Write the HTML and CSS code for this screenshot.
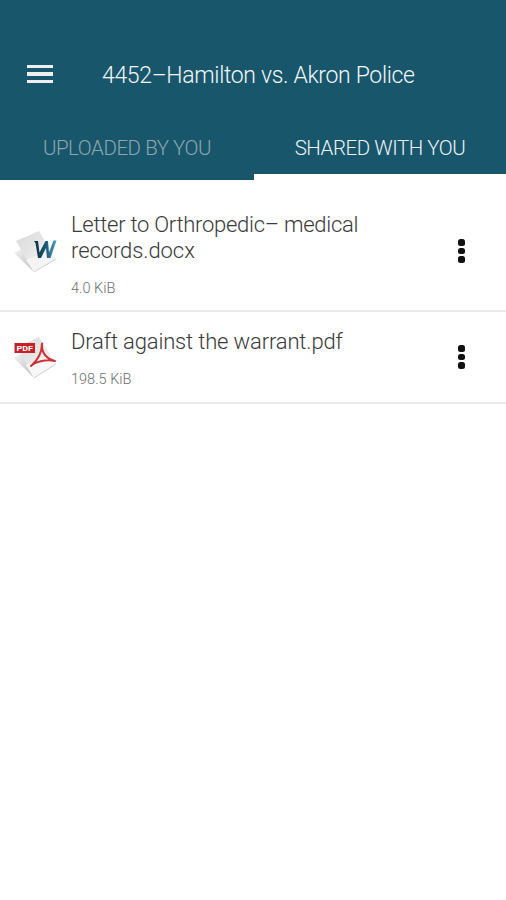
FILE: index.html
```html
<!DOCTYPE html>
<html lang="en">
<head>
  <meta charset="UTF-8">
  <title>4452–Hamilton vs. Akron Police</title>
  <link rel="stylesheet" href="styles.css">
</head>
<body>
  <header class="app-header">
    <div class="toolbar">
      <button class="menu" aria-label="Menu"><span></span><span></span><span></span></button>
      <h1>4452–Hamilton vs. Akron Police</h1>
    </div>
    <nav class="tabs">
      <a class="tab">UPLOADED BY YOU</a>
      <a class="tab active">SHARED WITH YOU</a>
    </nav>
  </header>

  <main class="files">
    <div class="file file-tall">
      <svg class="file-icon" width="44" height="44" viewBox="0 0 44 44">
        <defs>
          <linearGradient id="paper" x1="0" y1="0" x2="1" y2="1">
            <stop offset="0" stop-color="#d8d8d8"/>
            <stop offset="1" stop-color="#fafafa"/>
          </linearGradient>
          <linearGradient id="shade" x1="0" y1="0" x2="1" y2="1">
            <stop offset="0" stop-color="#f4f4f4"/>
            <stop offset="1" stop-color="#bdbdbd"/>
          </linearGradient>
          <linearGradient id="word" x1="0" y1="0" x2="1" y2="0">
            <stop offset="0" stop-color="#102c3e"/>
            <stop offset=".55" stop-color="#1b5c7c"/>
            <stop offset="1" stop-color="#4fa3c4"/>
          </linearGradient>
        </defs>
        <path d="M0 24L8 20L20 43Z" fill="url(#shade)"/>
        <path d="M2 12L25 2L42 30L20 43Z" fill="url(#paper)"/>
        <path d="M12 31L33 23L42 30L20 43Z" fill="#f4f4f4"/>
        <path d="M20 43L42 30" stroke="#d2d2d2"/>
        <path d="M20 12H24L25.500 23.500L31.500 12H34L35 23.500L39.500 11.500H42.500L36.500 29H33L32 19L27 29H24L21.500 14Z" fill="url(#word)"/>
      </svg>
      <div class="info">
        <div class="name">Letter to Orthropedic– medical<br><span class="name-rest">records.docx</span></div>
        <div class="size">4.0 KiB</div>
      </div>
      <button class="more" aria-label="More"><span></span><span></span><span></span></button>
    </div>

    <div class="file">
      <svg class="file-icon" width="44" height="44" viewBox="0 0 44 44">
        <path d="M0 23L8 18L20 43Z" fill="url(#shade)"/>
        <path d="M4 12L25 2L42 29L20 43Z" fill="url(#paper)"/>
        <path d="M12 30L33 21L42 29L20 43Z" fill="#f7f7f7"/>
        <path d="M20 43L42 29" stroke="#d2d2d2"/>
        <rect x=".5" y="8" width="20.500" height="10" fill="#c91f28"/>
        <text x="2.500" y="16" class="pdf-label" textLength="16.500" lengthAdjust="spacingAndGlyphs">PDF</text>
        <path d="M28 8.500C28 15 25 24 17 31M28 8.500C27 17 32 24 41 26M17 31C21 27 31 24 41 26" fill="none" stroke="#cf3036" stroke-width="2" stroke-linecap="round"/>
      </svg>
      <div class="info">
        <div class="name name-short">Draft against the warrant.pdf</div>
        <div class="size">198.5 KiB</div>
      </div>
      <button class="more" aria-label="More"><span></span><span></span><span></span></button>
    </div>
  </main>
</body>
</html>
```

FILE: styles.css
```css
* { box-sizing: border-box; }
body { margin: 0; min-height: 100vh; background: #fff; font-family: Roboto, "Liberation Sans", sans-serif; }
button { border: 0; padding: 0; background: none; cursor: pointer; }

/* Header */
.app-header { height: 180px; padding-top: 44px; background: #18566c; }
.toolbar { display: flex; align-items: center; height: 60px; padding-left: 27px; }
.menu { display: flex; flex-direction: column; gap: 4px; width: 26px; margin-right: 49px; }
.menu span { height: 3.5px; background: #eeeeec; }
h1 { margin: 0; padding-top: 3px; font-size: 23px; font-weight: 300; line-height: 28px; letter-spacing: -0.34px; color: #f3f7f8; white-space: nowrap; }
.tabs { display: flex; height: 76px; }
.tab { width: 254px; padding-top: 31px; font-size: 20.5px; font-weight: 300; line-height: 26px; letter-spacing: -0.45px; text-align: center; color: #8ea6af; white-space: nowrap; }
.tab.active { width: 252px; color: #eef4f6; border-bottom: 6px solid #fff; }

/* File list */
.file { display: flex; align-items: center; height: 92px; padding-left: 14px; border-bottom: 2px solid #ebebeb; }
.file-tall { height: 132px; padding-top: 12px; }
.file-icon { flex: none; margin-right: 13px; }
.info { flex: 1; padding-top: 3px; }
.name { font-size: 22px; font-weight: 300; line-height: 26px; letter-spacing: -0.27px; color: #3a3a3a; white-space: nowrap; }
.name-short { letter-spacing: -0.15px; }
.name-rest { letter-spacing: -0.08px; }
.size { margin-top: 16px; font-size: 14.5px; font-weight: 300; line-height: 18px; color: #707070; }
.file-tall .info { padding-top: 7px; }
.more { display: flex; flex-direction: column; gap: 2px; width: 7px; margin-right: 41px; }
.more span { height: 6.5px; border-radius: 2.5px; background: #111; }
.pdf-label { font: bold 8px Roboto, "Liberation Sans", sans-serif; fill: #fff; }
```
